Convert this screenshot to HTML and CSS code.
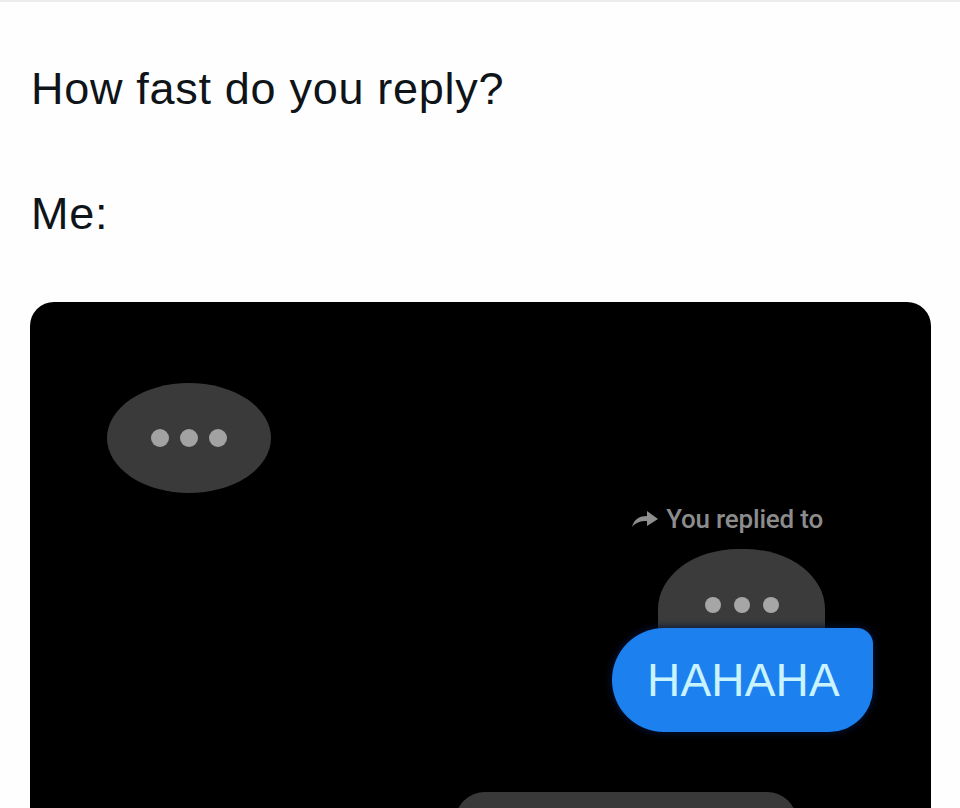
FILE: index.html
```html
<!DOCTYPE html>
<html>
<head>
<meta charset="utf-8">
<link rel="stylesheet" href="styles.css">
</head>
<body>
<div class="topline"></div>
<div class="post">
  <p class="line q">How fast do you reply?</p>
  <p class="line me">Me:</p>
  <div class="card">
    <div class="typing">
      <span class="dot"></span><span class="dot"></span><span class="dot"></span>
    </div>
    <div class="replygroup">
      <div class="label">
        <svg class="arrow" width="30" height="20" viewBox="0 0 30 20">
          <path d="M2 18 C4 10 10 7 17 7 L17 2 L28 10 L17 17 L17 12 C11 12 6 13 2 18 Z" fill="#8e8e8e"/>
        </svg>
        <span>You replied to</span>
      </div>
      <div class="quoted">
        <span class="dot small"></span><span class="dot small"></span><span class="dot small"></span>
      </div>
      <div class="blue">HAHAHA</div>
      <div class="next"></div>
    </div>
  </div>
</div>
</body>
</html>
```
FILE: styles.css
```css
html, body {
  margin: 0;
  padding: 0;
  background: #fefefe;
}
body {
  width: 960px;
  height: 808px;
  overflow: hidden;
  font-family: "Liberation Sans", Arial, sans-serif;
}
.topline {
  height: 2px;
  background: #ececec;
}
.post {
  padding: 0 29px 0 30px;
}
.line {
  margin: 0;
  padding-left: 1px;
  font-size: 45px;
  line-height: 52px;
  color: #0f1419;
  letter-spacing: 0.7px;
}
.q {
  margin-top: 61px;
}
.me {
  margin-top: 73px;
}
.card {
  margin-top: 62px;
  background: #000;
  border-radius: 24px 24px 0 0;
  height: 520px;
  overflow: hidden;
  padding-top: 81px;
  box-sizing: border-box;
}
.typing {
  margin-left: 77px;
  width: 164px;
  height: 110px;
  border-radius: 82px / 55px;
  background: #3a3a3a;
  display: flex;
  align-items: center;
  justify-content: center;
  gap: 11px;
}
.dot {
  width: 18px;
  height: 18px;
  border-radius: 50%;
  background: #a2a2a2;
}
.dot.small {
  width: 16px;
  height: 16px;
  background: #a6a6a6;
}
.replygroup {
  display: flex;
  flex-direction: column;
  align-items: flex-end;
  padding-right: 58px;
}
.label {
  margin-top: 12px;
  margin-right: 50px;
  display: flex;
  align-items: center;
  gap: 6px;
  color: #8c8c8c;
  font-family: Roboto, "Liberation Sans", sans-serif;
  font-weight: 500;
  font-size: 26px;
  line-height: 28px;
  letter-spacing: -0.2px;
}
.arrow {
  display: block;
}
.quoted {
  margin-top: 16px;
  margin-right: 48px;
  width: 167px;
  height: 100px;
  border-radius: 80px 80px 0 0 / 60px 60px 0 0;
  background: #3b3b3b;
  display: flex;
  justify-content: center;
  align-items: flex-start;
  padding-top: 48px;
  box-sizing: border-box;
  gap: 13px;
}
.blue {
  margin-top: -21px;
  width: 261px;
  height: 104px;
  box-sizing: border-box;
  border-radius: 52px 16px 44px 52px;
  background: #1c80ef;
  box-shadow: 0 0 6px 2px rgba(5, 20, 60, 0.8);
  color: #c9f3ff;
  font-size: 46px;
  line-height: 104px;
  padding-left: 35px;
  letter-spacing: 0.2px;
}
.next {
  margin-top: 60px;
  margin-right: 76px;
  width: 342px;
  height: 40px;
  border-radius: 30px 30px 0 0;
  background: #393939;
}
```
